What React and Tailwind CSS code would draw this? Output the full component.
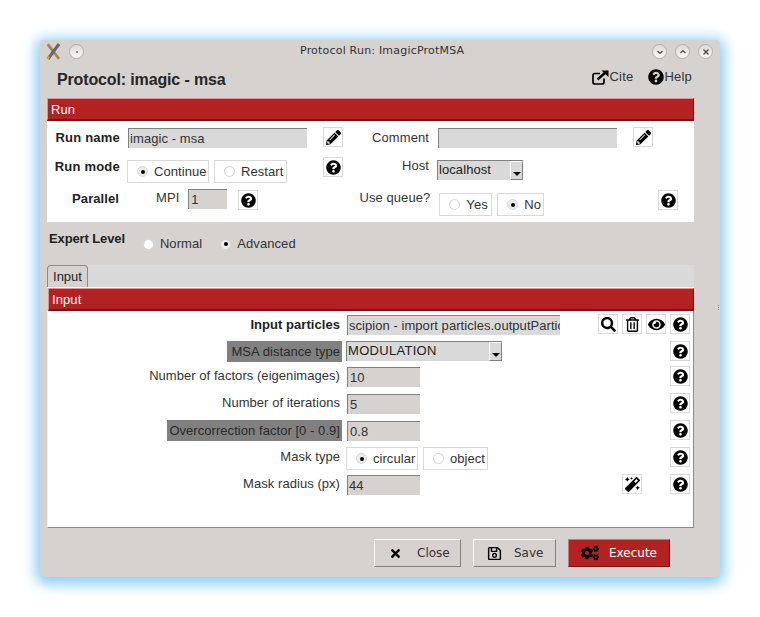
import {
  FaCogs,
  FaEye,
  FaMagic,
  FaPencilAlt,
  FaQuestionCircle,
  FaRegSave,
  FaRegTrashAlt,
  FaSearch,
  FaTimes,
} from "react-icons/fa";

const SANS = "font-['Liberation_Sans',Arial,sans-serif]";
const DEJAVU = "font-['DejaVu_Sans',sans-serif]";

const FORM_ROWS = [
  { id: "factors", label: "Number of factors (eigenimages)", value: "10", top: "mt-[4px]" },
  { id: "iterations", label: "Number of iterations", value: "5", top: "mt-[6px]" },
];

export default function App() {
  return (
    <div className={`min-h-[617px] w-[760px] bg-white pl-10 pt-10 ${SANS}`}>
      <div className="relative flex h-[537px] w-[680px] flex-col rounded-t-[4px] rounded-b-[5px] bg-[#d6d2d0] shadow-[0_3px_14px_4px_#85ccfb]">
        <TitleBar />
        <ProtocolHeader />
        <div className="ml-[7px] w-[647px]">
          <SectionBar title="Run" />
          <RunPanel />
        </div>
        <ExpertLevel />
        <div className="ml-[7px] w-[647px]">
          <TabStrip />
          <div className="h-[1px] bg-white" />
          <div className="ml-[1px]">
            <SectionBar title="Input" />
          </div>
          <InputPanel />
        </div>
        <ActionButtons />
        {/* agarradera del panel */}
        <div className="absolute left-[678px] top-[265px] flex flex-col gap-[1px]">
          <span className="h-[1px] w-[1px] bg-[#8c8c8c]" />
          <span className="h-[1px] w-[1px] bg-[#8c8c8c]" />
          <span className="h-[1px] w-[1px] bg-[#8c8c8c]" />
        </div>
      </div>
    </div>
  );
}

function TitleBar() {
  return (
    <div className="flex h-[22px] items-center pt-[1px]">
      <XLogo />
      <WindowDot className="ml-[8px]">
        <span className="h-[2px] w-[2px] rounded-full bg-[#666]" />
      </WindowDot>
      <div className={`ml-[216px] w-[200px] text-[11px] tracking-[0.2px] text-[#333] ${DEJAVU}`}>
        Protocol Run: ImagicProtMSA
      </div>
      <div className="ml-auto mr-[7px] flex gap-[8px]">
        <WindowDot>
          <Chevron d="M2.5 4 5 6.5 7.5 4" />
        </WindowDot>
        <WindowDot>
          <Chevron d="M2.5 6 5 3.5 7.5 6" />
        </WindowDot>
        <WindowDot>
          <Chevron d="M2.5 2.5 7.5 7.5M7.5 2.5 2.5 7.5" />
        </WindowDot>
      </div>
    </div>
  );
}

function Chevron({ d }) {
  return (
    <svg width="10" height="10" viewBox="0 0 10 10" fill="none" stroke="#444" strokeWidth="1.2">
      <path d={d} />
    </svg>
  );
}

function WindowDot({ className = "", children }) {
  return (
    <div
      className={`flex h-[15px] w-[15px] items-center justify-center rounded-full border border-[#b3afad] bg-gradient-to-b from-[#dedbd9] to-[#f8f8f7] ${className}`}
    >
      {children}
    </div>
  );
}

function XLogo() {
  return (
    <svg className="ml-[6px]" width="15" height="17" viewBox="0 0 15 17" fill="none">
      <path d="M2 1 13 16" stroke="#e8a04a" strokeWidth="3" />
      <path d="M1.5 1.5 13 15.5" stroke="#8a857f" strokeWidth="2" />
      <path d="M13 1 2 16" stroke="#6b6660" strokeWidth="3" />
      <path d="M3 13.5 1.5 15.5" stroke="#e89a3c" strokeWidth="2.5" />
    </svg>
  );
}

function ProtocolHeader() {
  return (
    <div className="flex h-[36px] items-start">
      <h1 className="ml-[17px] mt-[9px] text-[16px] leading-[18px] font-bold tracking-[-0.14px] text-[#262626]">
        Protocol: imagic - msa
      </h1>
      <div className="ml-auto mr-[28px] mt-[6px] flex items-center text-[13px] leading-[18px] tracking-[0.2px] text-[#333]">
        <CiteIcon />
        <span className="ml-[1px]">Cite</span>
        <FaQuestionCircle className="ml-[15px] text-[16px] text-black" />
        <span>Help</span>
      </div>
    </div>
  );
}

function CiteIcon() {
  return (
    <svg width="17" height="15" viewBox="0 0 17 15" fill="none" stroke="#000">
      <path d="M8 3.5H3Q1 3.5 1 5.5V12Q1 14 3 14H10Q12 14 12 12V8.5" strokeWidth="1.7" />
      <path d="M5.5 9.5 14 2" strokeWidth="2.4" />
      <path d="M9.5 0.5H16.5V7Z" fill="#000" stroke="none" />
    </svg>
  );
}

function SectionBar({ title }) {
  return (
    <div className="flex h-[23px] items-center border-t border-l border-t-[#f08c8c] border-l-[#f08c8c] border-r border-b-2 border-r-[#7a1212] border-b-[#7a1212] bg-[#b22222] pl-[3px] pt-[1px] text-[13px] tracking-[0.1px] text-white">
      {title}
    </div>
  );
}

function RunPanel() {
  return (
    <div className="h-[101px] bg-white text-[13px] tracking-[0.08px] text-[#333]">
      <div className="flex h-[26px] items-start pt-[6px]">
        <Label className="w-[73px] pt-[2px] font-bold tracking-[0.22px] text-[#222]">Run name</Label>
        <Entry className="ml-[8px] mt-[1px] w-[179px] pl-[1px]" bg="bg-[#d9d9d9]">imagic - msa</Entry>
        <IconButton className="ml-[16px]"><FaPencilAlt /></IconButton>
        <Label className="ml-[10px] w-[76px] pt-[2px]">Comment</Label>
        <Entry className="ml-[9px] mt-[1px] w-[179px]" bg="bg-[#d9d9d9]" />
        <IconButton className="ml-[16px]"><FaPencilAlt /></IconButton>
      </div>
      <div className="flex h-[38px] items-start">
        <Label className="mt-[11px] w-[73px] font-bold tracking-[0.22px] text-[#222]">Run mode</Label>
        <div className="ml-[7px] mt-[13px]"><RadioGroup options={[["Continue", true, 82], ["Restart", false, 73]]} /></div>
        <IconButton className="ml-[36px] mt-[10px]"><FaQuestionCircle /></IconButton>
        <Label className="ml-[10px] mt-[10px] w-[76px]">Host</Label>
        <div className="ml-[8px] mt-[13px]"><Select width="w-[86px]" value="localhost" /></div>
      </div>
      <div className="flex items-start">
        <Label className="mt-[5px] w-[72px] font-bold text-[#222]">Parallel</Label>
        <span className="ml-[37px] mt-[4px] leading-[18px]">MPI</span>
        <Entry className="ml-[9px] mt-[4px] w-[39px] pl-[2px]" bg="bg-[#d6d2d0]">1</Entry>
        <IconButton className="ml-[11px] mt-[5px]"><FaQuestionCircle /></IconButton>
        <Label className="ml-[93px] mt-[4px] w-[79px]">Use queue?</Label>
        <div className="ml-[9px] mt-[8px]"><RadioGroup options={[["Yes", false, 53], ["No", true, 47]]} /></div>
        <IconButton className="ml-[114px] mt-[5px]"><FaQuestionCircle /></IconButton>
      </div>
    </div>
  );
}

function ExpertLevel() {
  return (
    <div className="flex h-[43px] items-start text-[13px] tracking-[0.08px] text-[#333]">
      <span className="ml-[9px] mt-[8px] leading-[18px] font-bold tracking-[-0.12px] text-[#222]">Expert Level</span>
      <div className="ml-[18px] mt-[14px] flex items-center">
        <Radio />
        <span className="ml-[6px] leading-[16px]">Normal</span>
        <Radio checked className="ml-[18px]" />
        <span className="ml-[6px] leading-[16px]">Advanced</span>
      </div>
    </div>
  );
}

function TabStrip() {
  return (
    <div className="flex h-[22px] bg-[#d9d9d9]">
      <div className="flex w-[41px] items-center justify-center rounded-t-[4px] border border-b-0 border-[#8c8c8c] bg-[#d6d2d0] text-[13px] text-[#222]">
        Input
      </div>
    </div>
  );
}

function InputPanel() {
  return (
    <div className="h-[217px] border-r border-b border-l border-[#8c8c8c] border-l-[#f0eeed] bg-white text-[13px] tracking-[0.05px] text-[#333]">
      <FormRow className="pt-[3px]" labelClass="pt-[2px]" label={<span className="font-bold text-[#222]">Input particles</span>}>
        <Entry className="mt-[1px] w-[213px] overflow-hidden whitespace-nowrap pl-[1px]" bg="bg-[#d9d9d9]">
          scipion - import particles.outputPartic
        </Entry>
        <div className="ml-auto mr-[3px] flex gap-[4px]">
          <IconButton><FaSearch /></IconButton>
          <IconButton><FaRegTrashAlt /></IconButton>
          <IconButton><FaEye className="text-[17px]" /></IconButton>
          <IconButton><FaQuestionCircle /></IconButton>
        </div>
      </FormRow>

      <FormRow className="mt-[6px]" muted label="MSA distance type" labelWidth="w-[115px]">
        <div className="-ml-[1px] tracking-[0.3px]"><Select width="w-[156px]" value="MODULATION" /></div>
        <IconButton className="ml-auto mr-[3px]"><FaQuestionCircle /></IconButton>
      </FormRow>

      {FORM_ROWS.map((row) => (
        <FormRow key={row.id} className={row.top} label={row.label}>
          <Entry className="mt-[1px] w-[73px] pl-[2px]" bg="bg-[#d6d2d0]">{row.value}</Entry>
          <IconButton className="ml-auto mr-[3px]"><FaQuestionCircle /></IconButton>
        </FormRow>
      ))}

      <FormRow className="mt-[6px]" muted label="Overcorrection factor [0 - 0.9]" labelWidth="w-[175px]">
        <Entry className="mt-[1px] w-[73px] pl-[2px]" bg="bg-[#d6d2d0]">0.8</Entry>
        <IconButton className="ml-auto mr-[3px]"><FaQuestionCircle /></IconButton>
      </FormRow>

      <FormRow className="mt-[6px]" label="Mask type">
        <div className="-ml-[1px]"><RadioGroup options={[["circular", true, 72], ["object", false, 65]]} /></div>
        <IconButton className="ml-auto mr-[3px]"><FaQuestionCircle /></IconButton>
      </FormRow>

      <FormRow className="mt-[4px]" label="Mask radius (px)">
        <Entry className="mt-[1px] w-[73px] pl-[1px]" bg="bg-[#d6d2d0]">44</Entry>
        <IconButton className="ml-[202px]"><FaMagic /></IconButton>
        <IconButton className="ml-auto mr-[3px]"><FaQuestionCircle /></IconButton>
      </FormRow>
    </div>
  );
}

function FormRow({ label, muted, labelWidth, labelClass = "", className = "", children }) {
  return (
    <div className={`flex items-start ${className}`}>
      <div className="flex w-[294px] shrink-0 justify-end">
        {muted ? (
          <div className={`flex h-[21px] items-center justify-end bg-[#808080] pr-[2px] text-[#2b2b2b] ${labelWidth}`}>
            {label}
          </div>
        ) : (
          <div className={`flex h-[20px] items-center pr-[2px] ${labelClass}`}>{label}</div>
        )}
      </div>
      <div className="flex min-w-0 flex-1 items-start pl-[5px]">{children}</div>
    </div>
  );
}

function Label({ className = "", children }) {
  return <div className={`text-right leading-[18px] ${className}`}>{children}</div>;
}

function Entry({ className = "", bg, children }) {
  return (
    <div className={`flex h-[20px] shrink-0 items-center border-t border-l border-[#808080] leading-[18px] text-[#333] ${bg} ${className}`}>
      {children}
    </div>
  );
}

function IconButton({ className = "", children }) {
  return (
    <div className={`flex h-[20px] w-[20px] shrink-0 items-center justify-center border border-[#d9d9d9] bg-white text-[15px] text-black ${className}`}>
      {children}
    </div>
  );
}

function Radio({ checked, className = "" }) {
  return (
    <span className={`flex h-[11px] w-[11px] shrink-0 items-center justify-center rounded-full border border-[#d4d4d4] ${checked ? "bg-[#ececec]" : "bg-white"} ${className}`}>
      {checked && <span className="h-[4px] w-[4px] rounded-full bg-black" />}
    </span>
  );
}

function RadioGroup({ options }) {
  return (
    <div className="flex gap-[5px]">
      {options.map(([text, checked, width]) => (
        <div
          key={text}
          style={{ width }}
          className="flex h-[23px] items-center border border-[#d9d9d9] pl-[9px] text-[#333]"
        >
          <Radio checked={checked} />
          <span className="ml-[6px] leading-[16px]">{text}</span>
        </div>
      ))}
    </div>
  );
}

function Select({ width, value }) {
  return (
    <div className={`flex h-[20px] items-stretch border-t border-l border-[#808080] bg-[#d9d9d9] text-[#222] ${width}`}>
      <span className="flex-1 pl-[1px] leading-[18px]">{value}</span>
      <span className="relative w-[13px] border border-t-white border-l-white border-r-[#808080] border-b-[#808080] bg-[#d9d9d9]">
        <span className="absolute bottom-[3px] left-[2px] border-x-[4px] border-t-[4px] border-x-transparent border-t-black" />
      </span>
    </div>
  );
}

function ActionButtons() {
  return (
    <div className={`mt-[11px] flex text-[12px] ${DEJAVU}`}>
      <ActionButton className="ml-[334px] w-[87px]" icon={<FaTimes className="text-[13px] text-black" />} gap="ml-[15px]" iconLeft="pl-[14px]">
        Close
      </ActionButton>
      <ActionButton className="ml-[12px] w-[83px]" icon={<FaRegSave className="text-[15px] text-black" />} gap="ml-[12px]" iconLeft="pl-[13px]">
        Save
      </ActionButton>
      <div className="ml-[12px] flex h-[28px] w-[102px] items-center border border-t-[#e06a6a] border-l-[#e06a6a] border-r-[#7a1212] border-b-[#7a1212] bg-[#b22222] pl-[12px] text-white">
        <FaCogs className="text-[18px] text-black" />
        <span className="ml-[10px]">Execute</span>
      </div>
    </div>
  );
}

function ActionButton({ className, icon, gap, iconLeft, children }) {
  return (
    <div className={`flex h-[28px] items-center border border-t-white border-l-white border-r-[#808080] border-b-[#808080] bg-[#d6d2d0] text-[#333] ${iconLeft} ${className}`}>
      {icon}
      <span className={gap}>{children}</span>
    </div>
  );
}
